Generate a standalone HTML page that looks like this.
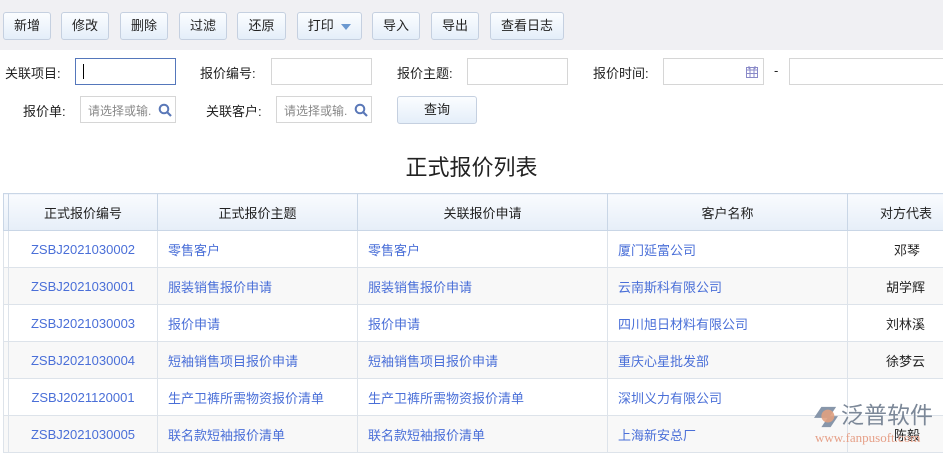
<!DOCTYPE html>
<html><head><meta charset="utf-8"><style>
*{box-sizing:border-box;margin:0;padding:0}
body{width:943px;height:450px;overflow:hidden;background:#fff;font-family:"Liberation Sans","Noto Sans CJK SC",sans-serif;font-size:13px;color:#333;position:relative}
.tb{position:absolute;left:0;top:0;width:943px;height:50px;background:#f0f0f3}
.btn{position:absolute;top:12px;height:28px;border:1px solid #c5d0e0;border-radius:3px;background:linear-gradient(#fbfdff,#e4eef9);text-align:center;line-height:26px;font-size:13px;color:#222}
.lbl{position:absolute;font-size:13px;color:#222}
.inp{position:absolute;height:27px;border:1px solid #d6d6d6;background:#fff}
.ph{position:absolute;left:7px;top:5px;color:#888;font-size:12px}
.title{position:absolute;top:150px;left:0;width:943px;text-align:center;font-size:22px;color:#222}
table{position:absolute;left:3px;top:193px;border-collapse:collapse;table-layout:fixed;width:1000px}
td,th{border:1px solid #dde3ea;height:37px;font-size:13px;font-weight:normal;white-space:nowrap;overflow:hidden}
th{background:linear-gradient(#f9fbfe,#e6eef8);color:#222;border-color:#c9d6e6}
td{color:#4a6fd8}
td.c{text-align:center}
td.l{padding-left:10px}
tr:nth-child(odd) td{background:#f8f8f8}
</style></head><body>
<div class="tb"></div>
<div class="btn" style="left:3px;width:48px">新增</div>
<div class="btn" style="left:61px;width:48px">修改</div>
<div class="btn" style="left:120px;width:48px">删除</div>
<div class="btn" style="left:179px;width:48px">过滤</div>
<div class="btn" style="left:237px;width:49px">还原</div>
<div class="btn" style="left:297px;width:65px">打印 <span style="display:inline-block;width:0;height:0;border-left:5px solid transparent;border-right:5px solid transparent;border-top:6px solid #6a98d0;vertical-align:middle;margin-left:4px"></span></div>
<div class="btn" style="left:372px;width:48px">导入</div>
<div class="btn" style="left:431px;width:48px">导出</div>
<div class="btn" style="left:490px;width:74px">查看日志</div>

<div class="lbl" style="left:5px;top:63px">关联项目:</div>
<div class="inp" style="left:75px;top:58px;width:101px;border-color:#5577bb"><div style="position:absolute;left:7px;top:5px;width:1px;height:15px;background:#000"></div></div>
<div class="lbl" style="left:200px;top:63px">报价编号:</div>
<div class="inp" style="left:271px;top:58px;width:101px"></div>
<div class="lbl" style="left:397px;top:63px">报价主题:</div>
<div class="inp" style="left:467px;top:58px;width:101px"></div>
<div class="lbl" style="left:593px;top:63px">报价时间:</div>
<div class="inp" style="left:663px;top:58px;width:101px"><svg style="position:absolute;right:5px;top:7px" width="12" height="12" viewBox="0 0 12 12"><rect x="0.5" y="1.5" width="11" height="10" fill="none" stroke="#8a8ac8"/><path d="M0 4h12M4 2v10M8 2v10M0 7.5h12" stroke="#8a8ac8"/><path d="M3 0v3M9 0v3" stroke="#8a8ac8"/></svg></div>
<div class="lbl" style="left:774px;top:63px">-</div>
<div class="inp" style="left:789px;top:58px;width:160px"></div>

<div class="lbl" style="left:23px;top:101px">报价单:</div>
<div class="inp" style="left:80px;top:96px;width:96px"><span class="ph">请选择或输.</span><svg style="position:absolute;right:3px;top:6px" width="14" height="14" viewBox="0 0 14 14"><circle cx="6" cy="6" r="4.3" fill="none" stroke="#5a78b8" stroke-width="2"/><path d="M9 9l4 4" stroke="#5a78b8" stroke-width="2.2"/></svg></div>
<div class="lbl" style="left:206px;top:101px">关联客户:</div>
<div class="inp" style="left:276px;top:96px;width:96px"><span class="ph">请选择或输.</span><svg style="position:absolute;right:3px;top:6px" width="14" height="14" viewBox="0 0 14 14"><circle cx="6" cy="6" r="4.3" fill="none" stroke="#5a78b8" stroke-width="2"/><path d="M9 9l4 4" stroke="#5a78b8" stroke-width="2.2"/></svg></div>
<div class="btn" style="left:397px;top:96px;width:80px;height:28px">查询</div>

<div class="title">正式报价列表</div>

<table>
<colgroup><col style="width:5px"><col style="width:149px"><col style="width:200px"><col style="width:250px"><col style="width:240px"><col style="width:156px"></colgroup>
<tr><th></th><th>正式报价编号</th><th>正式报价主题</th><th>关联报价申请</th><th>客户名称</th><th style="text-align:left;padding-left:32px">对方代表</th></tr>
<tr><td></td><td class="c">ZSBJ2021030002</td><td class="l">零售客户</td><td class="l">零售客户</td><td class="l">厦门延富公司</td><td style="color:#222;padding-left:46px">邓琴</td></tr>
<tr><td></td><td class="c">ZSBJ2021030001</td><td class="l">服装销售报价申请</td><td class="l">服装销售报价申请</td><td class="l">云南斯科有限公司</td><td style="color:#222;padding-left:38px">胡学辉</td></tr>
<tr><td></td><td class="c">ZSBJ2021030003</td><td class="l">报价申请</td><td class="l">报价申请</td><td class="l">四川旭日材料有限公司</td><td style="color:#222;padding-left:38px">刘林溪</td></tr>
<tr><td></td><td class="c">ZSBJ2021030004</td><td class="l">短袖销售项目报价申请</td><td class="l">短袖销售项目报价申请</td><td class="l">重庆心星批发部</td><td style="color:#222;padding-left:38px">徐梦云</td></tr>
<tr><td></td><td class="c">ZSBJ2021120001</td><td class="l">生产卫裤所需物资报价清单</td><td class="l">生产卫裤所需物资报价清单</td><td class="l">深圳义力有限公司</td><td></td></tr>
<tr><td></td><td class="c">ZSBJ2021030005</td><td class="l">联名款短袖报价清单</td><td class="l">联名款短袖报价清单</td><td class="l">上海新安总厂</td><td style="color:#222;padding-left:46px">陈毅</td></tr>
</table>

<svg style="position:absolute;left:814px;top:405px" width="24" height="24" viewBox="0 0 26 26"><path d="M8 2h16l-8 12H0z" fill="#8796aa"/><path d="M8 24h10l8-12H16z" fill="#8796aa"/><circle cx="15" cy="12" r="7" fill="#e0a080" opacity=".9"/></svg>
<div style="position:absolute;left:841px;top:401px;font-size:23px;line-height:28px;color:#7c8898;white-space:nowrap">泛普软件</div>
<div style="position:absolute;left:815px;top:430px;font-family:'Liberation Serif',serif;font-size:13px;color:#e6a088;white-space:nowrap">www.fanpusoft.com</div>
</body></html>
